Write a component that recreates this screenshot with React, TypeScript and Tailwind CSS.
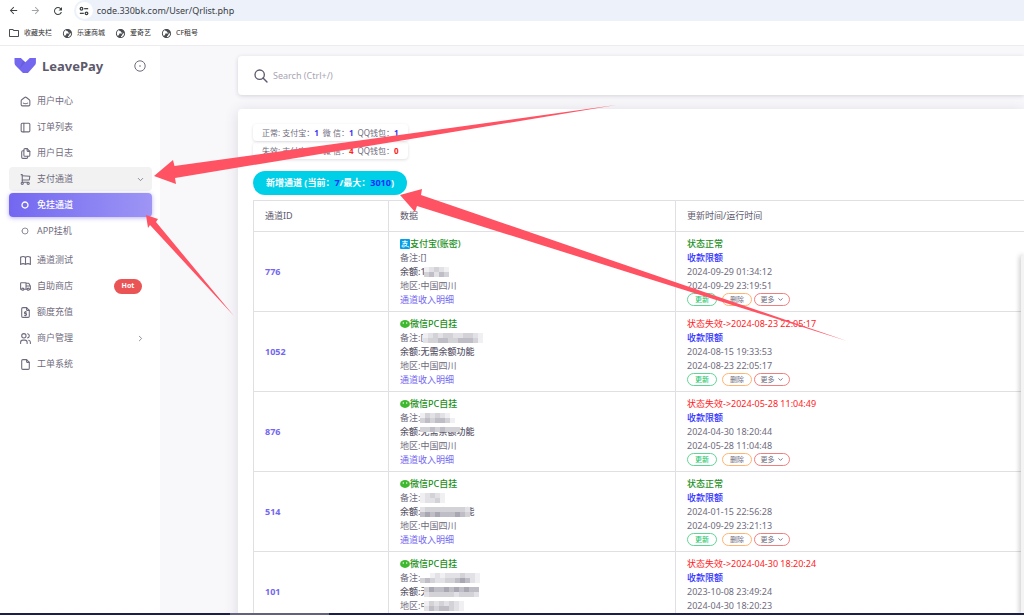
import type { ReactNode } from "react";
import {
  TbSmartHome,
  TbLayoutSidebar,
  TbFiles,
  TbShoppingCart,
  TbBook,
  TbTruck,
  TbFileDollar,
  TbUsers,
  TbFile,
  TbChevronDown,
  TbChevronRight,
  TbSearch,
  TbCircle,
} from "react-icons/tb";
import { MdArrowBack, MdArrowForward, MdRefresh, MdPublic, MdOutlineFolder } from "react-icons/md";

function SiteInfoIcon() {
  return (
    <svg viewBox="0 0 12 12" className="size-[10px]" fill="none" stroke="#3c4043" strokeWidth="1.5">
      <circle cx="3" cy="3.2" r="1.6" />
      <path d="M6.2 3.2H11" />
      <circle cx="9" cy="8.8" r="1.6" />
      <path d="M1 8.8H5.8" />
    </svg>
  );
}

function Bookmark({ icon, label }: { icon: ReactNode; label: string }) {
  return (
    <a href="#" className="flex items-center gap-1 text-[7px] text-[#303030]">
      {icon}
      {label}
    </a>
  );
}

function BrowserBar() {
  return (
    <header className="shrink-0 bg-white">
      <div className="flex h-[21px] items-center pl-2">
        <button aria-label="后退" className="mr-[11px] text-[#3c4043]">
          <MdArrowBack className="size-[11px]" />
        </button>
        <button aria-label="前进" className="mr-[11px] text-[#a0a3a7]">
          <MdArrowForward className="size-[11px]" />
        </button>
        <button aria-label="刷新" className="mr-2.5 text-[#3c4043]">
          <MdRefresh className="size-3" />
        </button>
        <div className="flex h-[21px] flex-1 items-center gap-1 rounded-l-full bg-[#ecf1fa] pl-0.5">
          <span className="flex size-[17px] items-center justify-center rounded-full bg-white">
            <SiteInfoIcon />
          </span>
          <input
            aria-label="地址"
            defaultValue="code.330bk.com/User/Qrlist.php"
            className="w-full bg-[#ecf1fa] text-[9px] text-[#3a3d44] outline-none"
          />
        </div>
      </div>
      <nav className="flex h-[25px] items-center gap-2.5 border-b border-[#ececee] pl-2">
        <Bookmark icon={<MdOutlineFolder className="size-3 text-[#4a4d51]" />} label="收藏夹栏" />
        <Bookmark icon={<MdPublic className="size-[11px] -scale-x-100 text-[#4a4d51]" />} label="乐速商城" />
        <Bookmark icon={<MdPublic className="size-[11px] -scale-x-100 text-[#4a4d51]" />} label="爱奇艺" />
        <Bookmark icon={<MdPublic className="size-[11px] -scale-x-100 text-[#4a4d51]" />} label="CF租号" />
      </nav>
    </header>
  );
}

function Logo() {
  return (
    <svg viewBox="0 0 32 22" className="h-[15px] w-[22px]" fill="none">
      <path
        fill="#7367F0"
        d="M0.6 0H10L16.5 6.2L23 0H32V6.9C32 6.9 31.8 9.2 30.7 10.4L20.4 22H13L2.4 11.4C0.6 9.4 0.6 6.9 0.6 6.9Z"
      />
      <path fill="#161616" fillOpacity=".06" d="M7.8 16.2L12.5 3.2L16.6 6.3Z" />
      <path fill="#161616" fillOpacity=".04" d="M7.8 16.2L13.9 4.2L16.6 6.3Z" />
    </svg>
  );
}

function MenuItem({
  icon,
  label,
  end,
  className = "",
}: {
  icon: ReactNode;
  label: string;
  end?: ReactNode;
  className?: string;
}) {
  return (
    <li>
      <a href="#" className={`flex h-6 items-center rounded pl-[9px] pr-[7px] ${className}`}>
        <span className="mr-[5px] flex w-[14px] justify-center text-[13px]">{icon}</span>
        <span className="flex-1">{label}</span>
        {end}
      </a>
    </li>
  );
}

function Sidebar() {
  return (
    <aside className="w-40 shrink-0 bg-white pl-[9px] pr-2 text-[9px] text-[#6f6b7d]">
      <div className="flex h-[43px] items-center pb-1 pl-[5px] pr-1.5">
        <Logo />
        <span className="ml-1.5 flex-1 text-[13px] font-bold text-[#5d596c]">LeavePay</span>
        <button aria-label="固定菜单">
          <svg viewBox="0 0 12 12" className="size-3" fill="none" stroke="#6f6b7d">
            <circle cx="6" cy="6" r="5.2" />
            <circle cx="6" cy="6" r="0.8" fill="#6f6b7d" stroke="none" />
          </svg>
        </button>
      </div>
      <ul className="flex flex-col gap-0.5">
        <MenuItem icon={<TbSmartHome />} label="用户中心" />
        <MenuItem icon={<TbLayoutSidebar />} label="订单列表" />
        <MenuItem icon={<TbFiles />} label="用户日志" />
        <MenuItem
          icon={<TbShoppingCart />}
          label="支付通道"
          end={<TbChevronDown className="size-[9px]" />}
          className="bg-[#f2f2f3]"
        />
        <MenuItem
          icon={<TbCircle className="size-2" strokeWidth={4} />}
          label="免挂通道"
          className="bg-linear-to-r from-[#7367f0] to-[#9e95f5] font-medium text-white shadow-[0_1px_4px_rgba(115,103,240,0.5)]"
        />
        <MenuItem icon={<TbCircle className="size-2 text-[#8f8c9a]" strokeWidth={3} />} label="APP挂机" className="mb-[3px]" />
        <MenuItem icon={<TbBook />} label="通道测试" />
        <MenuItem
          icon={<TbTruck />}
          label="自助商店"
          end={
            <span className="mr-[3px] flex h-[15px] w-7 items-center justify-center rounded-full bg-[#ea5455] text-[7px] font-bold text-white">
              Hot
            </span>
          }
        />
        <MenuItem icon={<TbFileDollar />} label="额度充值" />
        <MenuItem icon={<TbUsers />} label="商户管理" end={<TbChevronRight className="size-[9px]" />} />
        <MenuItem icon={<TbFile />} label="工单系统" />
      </ul>
    </aside>
  );
}

function AlipayIcon() {
  return (
    <svg viewBox="0 0 10 10" className="size-[10px]" fill="none" stroke="#fff" strokeWidth="0.9">
      <rect width="10" height="10" rx="1" fill="#02a0e8" stroke="none" />
      <path d="M2.2 2.7H7.8M5 1.2V4.4M2.7 4.4H7.1C6.6 6.6 4.8 8 3.1 8C1.6 8 1.5 6.2 3 6C4.8 5.8 6.6 7.2 9.4 8.2" />
    </svg>
  );
}

function WechatIcon() {
  return (
    <svg viewBox="0 0 10 8" className="h-2 w-[10px]">
      <ellipse cx="5" cy="4" rx="4.9" ry="3.9" fill="#3eb92f" />
      <circle cx="3.3" cy="3" r="0.7" fill="#fff" />
      <circle cx="6.7" cy="3" r="0.7" fill="#fff" />
    </svg>
  );
}

const SHADES = ["#ffffff", "#f0f0f2", "#e2e2e6", "#d2d2d7", "#bfbec6", "#a9a7b2"];

/* Pixelated cover for private values: one digit per 5px block, 0 is lightest. */
function Mosaic({ rows, shift = "left-0" }: { rows: string[]; shift?: string }) {
  const width = rows[0].length * 5;
  const height = rows.length * 5;
  return (
    <svg width={width} height={height} viewBox={`0 0 ${width} ${height}`} className={`absolute top-0.5 ${shift}`} shapeRendering="crispEdges">
      {rows.flatMap((row, y) =>
        row.split("").map((shade, x) => (
          <rect key={`${x}-${y}`} x={x * 5} y={y * 5} width="5" height="5" fill={SHADES[Number(shade)]} />
        )),
      )}
    </svg>
  );
}

type Channel = {
  id: string;
  alipay?: boolean;
  name: string;
  note: string;
  noteCover?: string[];
  balance: string;
  balanceCover?: string[];
  coverShift?: string;
  regionCover?: string[];
  collapsed?: boolean;
  failed?: string;
  updated: string;
  ran: string;
};

const channels: Channel[] = [
  {
    id: "776",
    alipay: true,
    name: "支付宝(账密)",
    note: "[]",
    balance: "1",
    balanceCover: ["12321", "34243"],
    coverShift: "left-1",
    updated: "2024-09-29 01:34:12",
    ran: "2024-09-29 23:19:51",
  },
  {
    id: "1052",
    name: "微信PC自挂",
    note: "[",
    noteCover: ["123233223321", "233443344431"],
    balance: "无需余额功能",
    failed: "2024-08-23 22:05:17",
    updated: "2024-08-15 19:33:53",
    ran: "2024-08-23 22:05:17",
  },
  {
    id: "876",
    name: "微信PC自挂",
    note: "",
    noteCover: ["1323210", "3434431"],
    balance: "无需余额功能",
    balanceCover: ["33434333"],
    failed: "2024-05-28 11:04:49",
    updated: "2024-04-30 18:20:44",
    ran: "2024-05-28 11:04:48",
  },
  {
    id: "514",
    name: "微信PC自挂",
    note: "",
    noteCover: ["12321", "12231"],
    balance: "无需余额功能",
    balanceCover: ["2333333332", "4545444543"],
    updated: "2024-01-15 22:56:28",
    ran: "2024-09-29 23:21:13",
  },
  {
    id: "101",
    name: "微信PC自挂",
    note: "",
    noteCover: ["001212223221", "343223345421"],
    balance: "无",
    balanceCover: ["35445454544", "23333323332"],
    coverShift: "left-1",
    regionCover: ["13232321", "24344321"],
    collapsed: true,
    failed: "2024-04-30 18:20:24",
    updated: "2023-10-08 23:49:24",
    ran: "2024-04-30 18:20:23",
  },
];

function ChannelRow({ c }: { c: Channel }) {
  return (
    <tr className="h-20 border-t border-[#e0dfe3]">
      <td className="border-r border-[#e0dfe3] pl-[11px] font-bold text-[#7367f0]">{c.id}</td>
      <td className="border-r border-[#e0dfe3] pb-1 pl-[11px] pt-[5px] align-top">
        <div className="flex items-center font-medium text-[#219021]">
          {c.alipay ? <AlipayIcon /> : <WechatIcon />}
          {c.name}
        </div>
        <div>
          备注:{c.note}
          <span className="relative">{c.noteCover && <Mosaic rows={c.noteCover} />}</span>
        </div>
        <div className="font-medium text-[#5d596c]">
          余额:
          <span className="relative">
            {c.balance}
            {c.balanceCover && <Mosaic rows={c.balanceCover} shift={c.coverShift} />}
          </span>
        </div>
        <div>
          地区:
          <span className="relative">
            {c.regionCover ? "中" : "中国四川"}
            {c.regionCover && <Mosaic rows={c.regionCover} shift="left-1" />}
          </span>
        </div>
        {!c.collapsed && (
          <div>
            <a href="#" className="text-[#7367f0]">
              通道收入明细
            </a>
          </div>
        )}
      </td>
      <td className="pb-1 pl-[11px] pt-[5px] align-top">
        {c.failed ? (
          <div className="text-[#ff1a1a]">状态失效-&gt;{c.failed}</div>
        ) : (
          <div className="font-medium text-[#219021]">状态正常</div>
        )}
        <div>
          <a href="#" className="font-medium text-[#2e2eff]">
            收款限额
          </a>
        </div>
        <div>{c.updated}</div>
        <div>{c.ran}</div>
        {!c.collapsed && (
          <div className="flex h-[13px] items-center text-[7px] leading-[11px]">
            <button className="mr-[5px] h-[13px] w-[30px] rounded-full border border-[#5fd695] font-medium text-[#28c76f]">
              更新
            </button>
            <button className="mr-0.5 h-[13px] w-[30px] rounded-full border border-[#ffb570]">删除</button>
            <button className="flex h-[13px] w-9 items-center justify-center gap-0.5 rounded-full border border-[#f07f80]">
              更多
              <TbChevronDown className="size-[7px]" strokeWidth={3} />
            </button>
          </div>
        )}
      </td>
    </tr>
  );
}

function Stat({ title, values, tone }: { title: string; values: [string, string, string]; tone: string }) {
  return (
    <div className="flex h-[17px] w-fit items-center rounded-sm px-[9px] text-[8px] shadow-[0_1px_3px_rgba(75,70,92,0.18)]">
      <span>{title}: 支付宝：</span>
      <b className={`mr-1 ${tone}`}>{values[0]}</b>
      <span>微 信：</span>
      <b className={`mr-1 ${tone}`}>{values[1]}</b>
      <span>QQ钱包：</span>
      <b className={tone}>{values[2]}</b>
    </div>
  );
}

function Arrows() {
  return (
    <svg viewBox="0 0 1024 615" className="pointer-events-none absolute left-0 top-0 h-[615px] w-[1024px]" fill="#ff5262">
      <path d="M154 176L173 160L174.5 166L616 105L175 178L176 184Z" />
      <path d="M400 195L422 189L421 195L847 341L417 206L415 212Z" />
      <path d="M146 215L158 219L156 222L234 316L150 225L148 228Z" />
    </svg>
  );
}

export default function App() {
  return (
    <div
      lang="zh-CN"
      className="relative flex h-screen flex-col overflow-hidden bg-[#f8f7fa] font-['Noto_Sans','Noto_Sans_CJK_SC',sans-serif] text-[9px] leading-[14px] text-[#6f6b7d]"
    >
      <BrowserBar />
      <div className="flex min-h-0 flex-1">
        <Sidebar />
        <main className="min-w-0 flex-1 overflow-hidden pl-[78px] pt-2.5">
          <div className="flex h-[39px] items-center gap-1 rounded-l bg-white pl-[15px] shadow-[0_1px_4px_rgba(75,70,92,0.2)]">
            <TbSearch className="size-4 text-[#5d596c]" />
            <input
              type="search"
              aria-label="Search"
              placeholder="Search (Ctrl+/)"
              className="flex-1 bg-transparent outline-none placeholder:text-[#a8a5b2]"
            />
          </div>
          <section className="mt-3.5 rounded-l bg-white pl-[15px] pt-[15px] shadow-[0_2px_14px_rgba(75,70,92,0.16)]">
            <div className="flex flex-col gap-px">
              <Stat title="正常" values={["1", "1", "1"]} tone="text-[#3a35f5]" />
              <Stat title="失效" values={["1", "4", "0"]} tone="text-[#ff2020]" />
            </div>
            <button className="mb-[5px] mt-3 flex h-6 items-center rounded-full bg-[#00cfe8] px-[13px] font-bold text-white">
              新增通道 (当前：<span className="text-[#1030ff]">7</span>/最大：
              <span className="text-[#1030ff]">3010</span>)
            </button>
            <table className="w-full table-fixed border-collapse border-l border-t border-[#e0dfe3]">
              <thead>
                <tr className="h-[31px] text-left text-[#5d596c]">
                  <th className="w-[135px] border-r border-[#e0dfe3] pl-[11px] font-normal">通道ID</th>
                  <th className="w-[287px] border-r border-[#e0dfe3] pl-[11px] font-normal">数据</th>
                  <th className="pl-[11px] font-normal">更新时间/运行时间</th>
                </tr>
              </thead>
              <tbody>
                {channels.map((c) => (
                  <ChannelRow key={c.id} c={c} />
                ))}
              </tbody>
            </table>
          </section>
        </main>
      </div>
      <div className="absolute bottom-0 right-0 top-[255px] w-[3px] rounded-tl bg-[#f4f4f5] shadow-[-1px_0_5px_rgba(0,0,0,0.3)]" />
      <div className="relative flex h-0.5 shrink-0 bg-[#1d1f4b]">
        <div className="ml-[230px] w-[99px] bg-[#62627f]" />
      </div>
      <Arrows />
    </div>
  );
}
